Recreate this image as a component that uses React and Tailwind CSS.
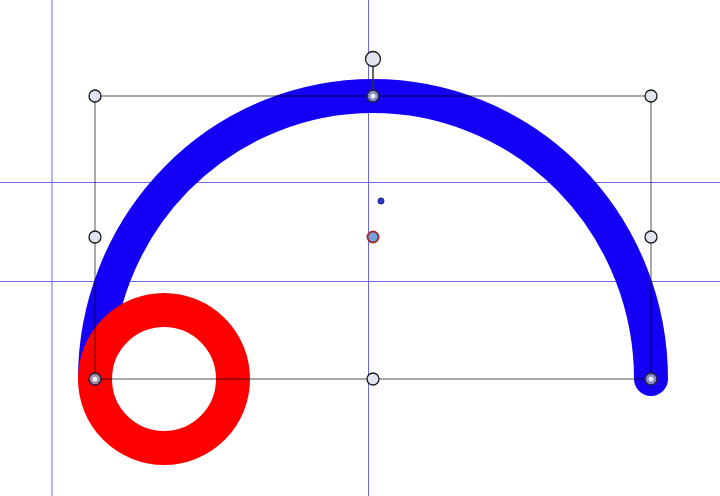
const HANDLES = [
  [95, 96], [651, 96],
  [95, 237], [651, 237],
  [373, 379],
]

function Handle({ x, y, r = 6 }) {
  return <circle cx={x} cy={y} r={r} fill="#dfe4ee" stroke="#1a1a1a" strokeWidth="1.3" />
}

function PointHandle({ x, y }) {
  return (
    <g>
      <circle cx={x} cy={y} r={6} fill="#9aa3c0" fillOpacity="0.85" stroke="#222244" strokeWidth="1.5" />
      <circle cx={x} cy={y} r={2.5} fill="#e8ecf5" />
    </g>
  )
}

export default function App() {
  return (
    <div className="w-[720px] h-[496px] bg-white overflow-hidden">
      <svg width="720" height="496" viewBox="0 0 720 496" className="block">
        {/* guides */}
        <g stroke="#6a6ae8" strokeWidth="1">
          <line x1="52" y1="0" x2="52" y2="496" />
          <line x1="368.5" y1="0" x2="368.5" y2="496" />
          <line x1="0" y1="182.5" x2="720" y2="182.5" />
          <line x1="0" y1="281.5" x2="720" y2="281.5" />
        </g>

        {/* shapes */}
        <path d="M95 379 A278 283 0 0 1 651 379" fill="none" stroke="#1400f5" strokeWidth="34" strokeLinecap="round" />
        <circle cx="164" cy="379" r="69" fill="none" stroke="#ff0000" strokeWidth="34" />

        {/* selection box */}
        <g stroke="#000" strokeOpacity="0.45" strokeWidth="1.5" fill="none">
          <rect x="95" y="96" width="556" height="283" />
        </g>
        <line x1="373" y1="66" x2="373" y2="96" stroke="#333" strokeWidth="1.5" />

        {HANDLES.map(([x, y]) => <Handle key={`${x}-${y}`} x={x} y={y} />)}
        <Handle x={373} y={59} r={7.5} />
        <PointHandle x={373} y={96} />
        <PointHandle x={95} y={379} />
        <PointHandle x={651} y={379} />

        {/* center */}
        <circle cx="373" cy="237" r="5.5" fill="#6fa3d8" stroke="#a03030" strokeWidth="2" />
        <circle cx="381" cy="201" r="3" fill="#2a3bd0" stroke="#1a1a80" strokeWidth="1" />
      </svg>
    </div>
  )
}
